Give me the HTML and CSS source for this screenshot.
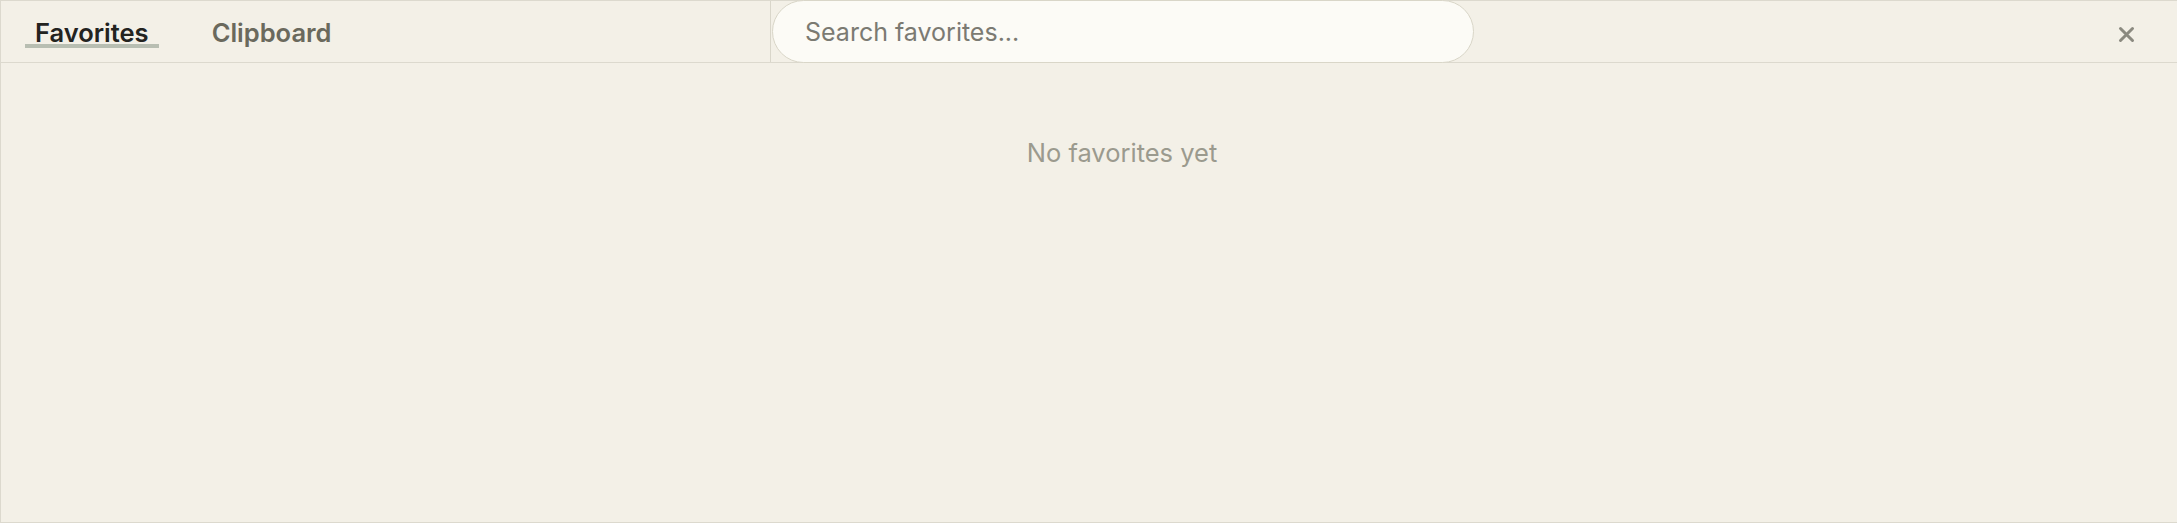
FILE: index.html
```html
<!DOCTYPE html>
<html lang="en">
    <head>
        <meta charset="UTF-8" />
        <meta name="viewport" content="width=device-width, initial-scale=1.0" />
        <title>Favorites</title>
        <link rel="stylesheet" href="styles.css">
    </head>
    <body>
        <section class="app">
            <header class="topbar">
                <nav class="tabs">
                    <button class="tab active" type="button">Favorites</button>
                    <button class="tab" type="button">Clipboard</button>
                </nav>
                <input class="search" type="text" placeholder="Search favorites..." />
                <button class="close" type="button" aria-label="Close">
                    <svg width="17" height="17" viewBox="0 0 17 17">
                        <path d="M2.5 2.5 L14.5 14.5 M14.5 2.5 L2.5 14.5" stroke="currentColor" stroke-width="3" stroke-linecap="round" fill="none"/>
                    </svg>
                </button>
            </header>
            <main class="content">
                <p class="empty">No favorites yet</p>
            </main>
        </section>
    </body>
</html>
```

FILE: styles.css
```css
* {
    padding: 0;
    margin: 0;
    box-sizing: border-box;
}
body {
    background-color: #f3f0e7;
    font-family: Inter, "Noto Sans", sans-serif;
}
.app {
    height: 523px;
    border: 1px solid #dcd9ce;
    border-right: none;
    display: flex;
    flex-direction: column;
}

/* top bar */
.topbar {
    height: 62px;
    display: flex;
    align-items: stretch;
    border-bottom: 1px solid #dcd9ce;
}
.tabs {
    width: 770px;
    display: flex;
    align-items: flex-start;
    gap: 43px;
    padding: 20px 0 0 24px;
    border-right: 1px solid #d9d6ca;
}
.tab {
    font-family: inherit;
    font-size: 25.5px;
    font-weight: 600;
    line-height: 23px;
    color: #6a695d;
    background: none;
    border: none;
    border-bottom: 4px solid transparent;
    padding: 0 10px;
}
.tab.active {
    color: #23231f;
    border-bottom-color: #b8beb2;
}

.search {
    width: 702px;
    height: 63px;
    margin: -1px 0 -1px 1px;
    padding: 0 32px;
    font-family: inherit;
    font-size: 25px;
    color: #3b3b36;
    background-color: #fcfbf6;
    border: 1.5px solid #d9d6c8;
    border-radius: 32px;
    outline: none;
}
.search::placeholder {
    color: #7b7a72;
}

.close {
    margin-left: auto;
    width: 102px;
    display: flex;
    align-items: center;
    justify-content: center;
    color: #8b8a80;
    background: none;
    border: none;
    padding-top: 6px;
}

/* content */
.content {
    flex: 1;
    display: flex;
    justify-content: center;
    padding-left: 66px;
}
.empty {
    margin-top: 74px;
    font-size: 25.5px;
    color: #9b9a8e;
}
```
